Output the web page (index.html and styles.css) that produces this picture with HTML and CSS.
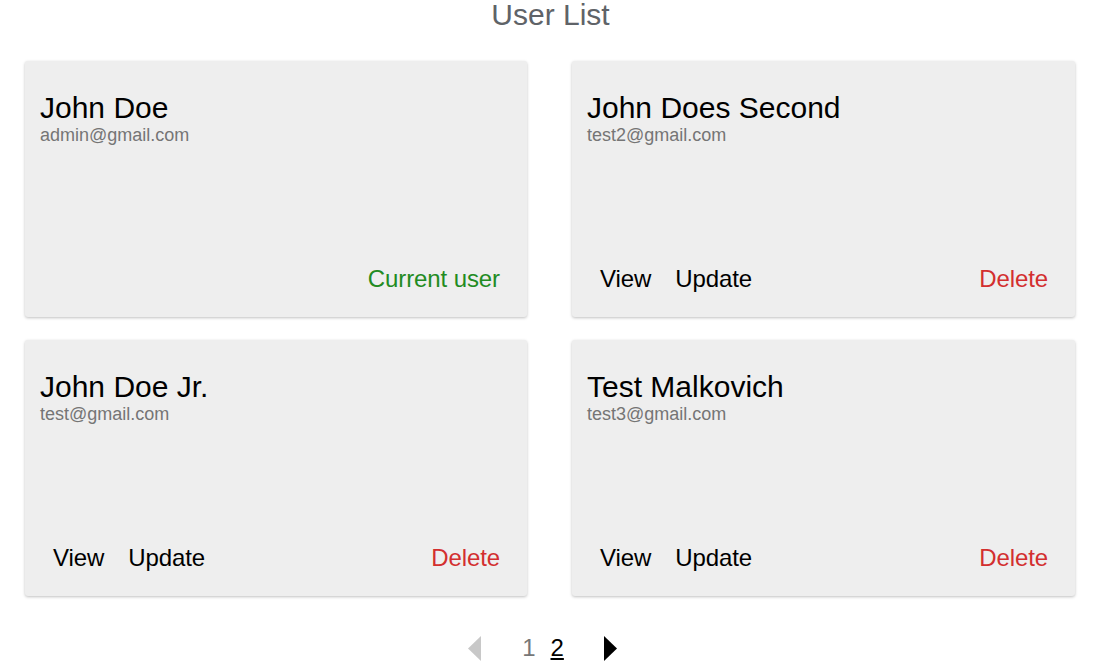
FILE: index.html
```html
<!DOCTYPE html>
<html lang="en">
<head>
<meta charset="utf-8">
<title>User List</title>
<link rel="stylesheet" href="styles.css">
</head>
<body>
<h1 class="title">User List</h1>
<div class="grid">
  <div class="card">
    <div class="name">John Doe</div>
    <div class="email">admin@gmail.com</div>
    <div class="actions">
      <span class="btn current">Current user</span>
    </div>
  </div>
  <div class="card">
    <div class="name">John Does Second</div>
    <div class="email">test2@gmail.com</div>
    <div class="actions">
      <span class="btn">View</span>
      <span class="btn">Update</span>
      <span class="btn delete">Delete</span>
    </div>
  </div>
  <div class="card">
    <div class="name">John Doe Jr.</div>
    <div class="email">test@gmail.com</div>
    <div class="actions">
      <span class="btn">View</span>
      <span class="btn">Update</span>
      <span class="btn delete">Delete</span>
    </div>
  </div>
  <div class="card">
    <div class="name">Test Malkovich</div>
    <div class="email">test3@gmail.com</div>
    <div class="actions">
      <span class="btn">View</span>
      <span class="btn">Update</span>
      <span class="btn delete">Delete</span>
    </div>
  </div>
</div>
<div class="pager">
  <svg class="arrow" width="13" height="25" viewBox="0 0 13 25"><polygon points="13,0 13,25 0,12.5" fill="#c8c8c8"/></svg>
  <span class="page inactive">1</span>
  <span class="page active">2</span>
  <svg class="arrow next" width="13" height="25" viewBox="0 0 13 25"><polygon points="0,0 13,12.5 0,25" fill="#000"/></svg>
</div>
</body>
</html>
```
FILE: styles.css
```css
html, body {
  margin: 0;
  padding: 0;
  background: #fff;
  font-family: "Liberation Sans", Arial, sans-serif;
}
.title {
  margin: 0;
  padding-right: 4px;
  font-size: 30px;
  line-height: 30px;
  font-weight: normal;
  color: #5f6368;
  text-align: center;
}
.grid {
  display: grid;
  grid-template-columns: 502px 503px;
  column-gap: 45px;
  row-gap: 23px;
  padding: 0 30px 0 25px;
  margin-top: 31px;
}
.card {
  height: 256px;
  box-sizing: border-box;
  background: #eeeeee;
  border-radius: 3px;
  box-shadow: 0 1px 3px rgba(0,0,0,0.25);
  padding: 30px 15px 0 15px;
  display: flex;
  flex-direction: column;
}
.name {
  font-size: 30px;
  color: #000;
}
.email {
  font-size: 18px;
  color: #757575;
}
.actions {
  margin-top: auto;
  display: flex;
  align-items: center;
  padding: 0 0 16px 0;
}
.btn {
  font-size: 24px;
  line-height: 27.6px;
  padding: 8px 12px;
  color: #000;
  letter-spacing: -0.1px;
}
.btn:first-child {
  padding-left: 13px;
}
.btn.delete, .btn.current {
  margin-left: auto;
}
.delete {
  color: #d32f2f;
}
.current {
  color: #228b22;
}
.pager {
  display: flex;
  justify-content: center;
  align-items: center;
  margin-top: 38px;
  padding-right: 20px;
}
.page {
  font-size: 24px;
  line-height: 28px;
  padding: 0 2px;
}
.inactive {
  color: #777;
  margin-left: 39px;
}
.active {
  color: #000;
  text-decoration: underline;
  margin-left: 11px;
}
.next {
  margin-left: 38px;
}
```
